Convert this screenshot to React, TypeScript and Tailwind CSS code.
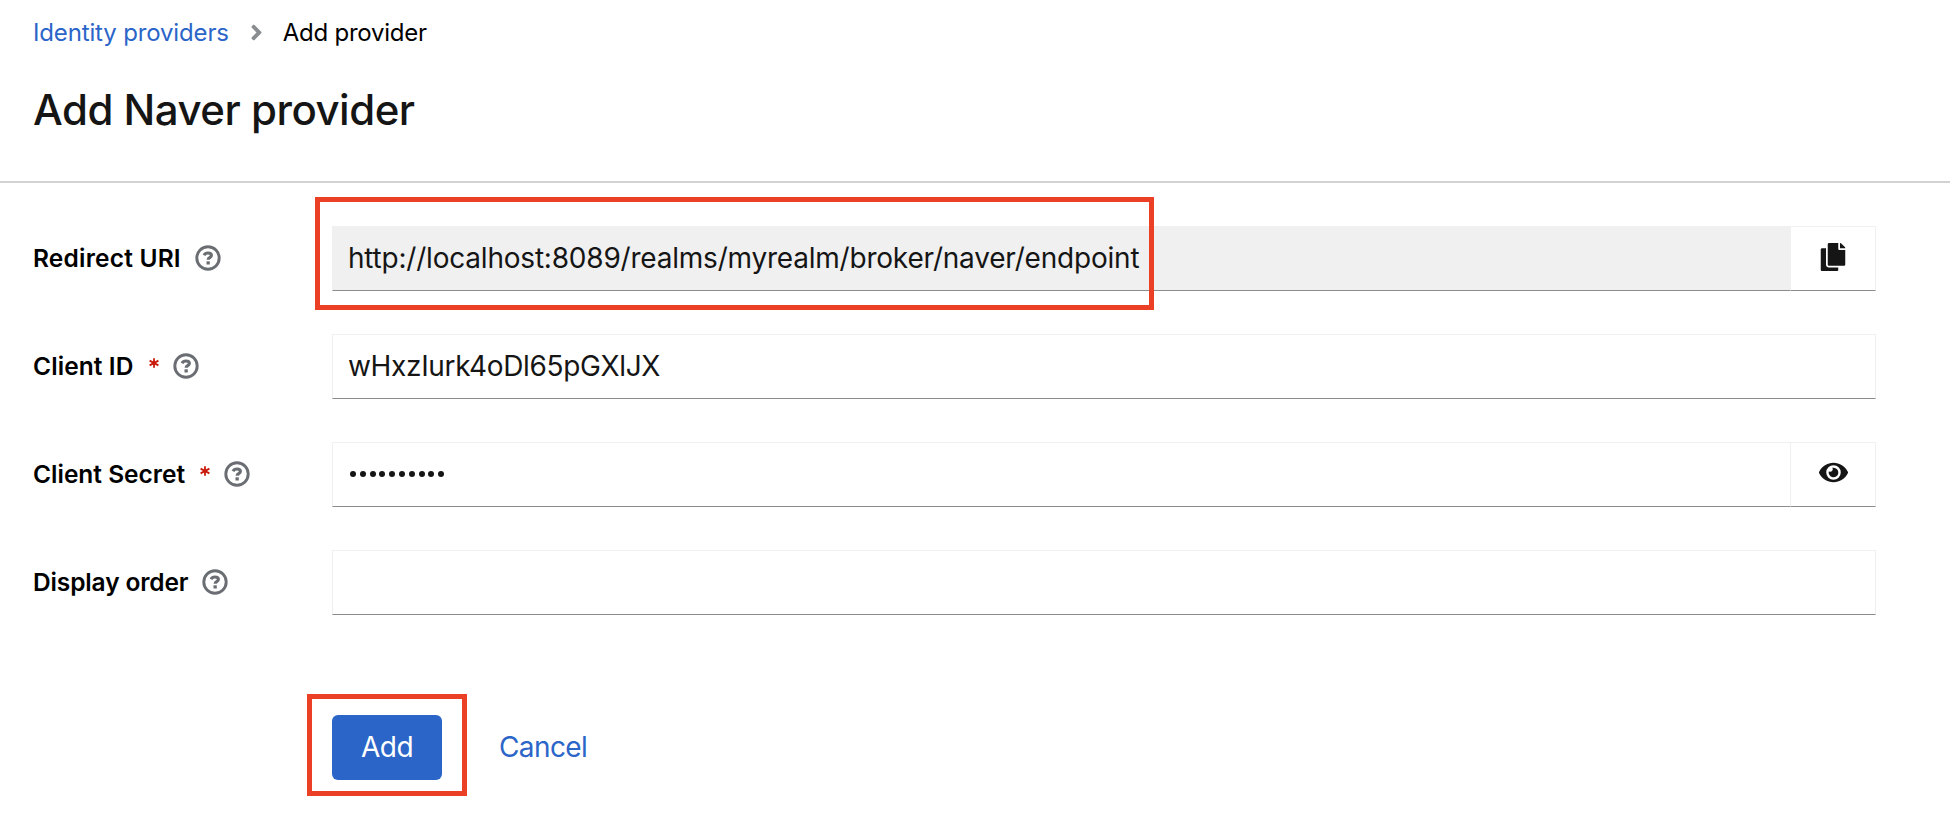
import type { ReactNode } from 'react';
import { FaAngleRight, FaCopy, FaEye } from 'react-icons/fa';

function HelpIcon() {
  return (
    <svg viewBox="0 0 26 26" className="size-[26px] shrink-0" fill="none" aria-hidden="true">
      <circle cx="13" cy="13" r="11.2" stroke="#6a6e73" strokeWidth="2.9" />
      <path d="M9 10.2C9.8 8.7 11.1 8 12.9 8c2 0 3.5 1 3.5 2.5 0 2.2-3.3 2.1-3.3 4.3" stroke="#6a6e73" strokeWidth="3.1" />
      <rect x="11.5" y="16.3" width="3.3" height="3.2" fill="#6a6e73" />
    </svg>
  );
}

function Asterisk() {
  return (
    <svg viewBox="0 0 10 10" className="mb-[7px] ml-[15px] size-[10px] shrink-0" stroke="#c9190b" strokeWidth="1.8" aria-hidden="true">
      <path d="M5 0.2v9.6M0.6 2.6l8.8 4.8M9.4 2.6L0.6 7.4" />
    </svg>
  );
}

type FieldProps = { label: string; tracking?: string; required?: boolean; children: ReactNode };

function Field({ label, tracking = '', required, children }: FieldProps) {
  return (
    <div className="flex h-[65px]">
      <div className="flex w-[300px] items-center pb-px pl-px">
        <span className={`text-[24.5px] leading-8 font-semibold text-black ${tracking}`}>{label}</span>
        {required && <Asterisk />}
        <span className="ml-[14px]">
          <HelpIcon />
        </span>
      </div>
      <div className="relative flex w-[1544px]">{children}</div>
    </div>
  );
}

const box = 'flex items-center border border-[#f0f0f0] border-b-[#8a8d90] text-[28px] leading-8 text-[#151515]';

export default function App() {
  return (
    <div className="h-[826px] w-[1950px] overflow-hidden bg-white font-['Inter',sans-serif]">
      <header className="h-[183px] border-b-2 border-[#d2d2d2] pl-8">
        <nav className="flex items-center pt-[17px] pl-px text-[24px] leading-8">
          <a className="tracking-[-0.15px] text-[#2b65c8]">Identity providers</a>
          <FaAngleRight className="mb-0.5 ml-[15px] size-[25px] text-[#8a8d90]" />
          <span className="ml-[14px] tracking-[-0.25px] text-black">Add provider</span>
        </nav>
        <h1 className="mt-[36px] pl-px text-[42px] leading-[50px] font-medium tracking-[-0.5px] text-[#151515]">Add Naver provider</h1>
      </header>
      <main className="flex flex-col gap-[43px] pt-[43px] pl-8">
        <Field label="Redirect URI" tracking="tracking-[0.2px]">
          <div className={`${box} flex-1 border-r-0 bg-[#f0f0f0] pb-0.5 pl-[15px] tracking-[-0.21px]`}>
            http://localhost:8089/realms/myrealm/broker/naver/endpoint
          </div>
          <button className={`${box} w-[86px] justify-center pb-1`}>
            <FaCopy className="size-[28px]" />
          </button>
          <div className="absolute -top-[29px] -left-[17px] h-[113px] w-[839px] border-5 border-[#eb4025]" />
        </Field>
        <Field label="Client ID" tracking="tracking-[0.1px]" required>
          <div className={`${box} flex-1 pb-0.5 pl-[15px] tracking-[-0.33px]`}>wHxzIurk4oDl65pGXlJX</div>
        </Field>
        <Field label="Client Secret" required>
          <div className={`${box} flex-1 border-r-0 pb-0.5 pl-[17px]`}>
            <span className="flex gap-[3.8px]">
              {Array.from({ length: 10 }, (_, i) => (
                <span key={i} className="size-[6px] rounded-full bg-[#151515]" />
              ))}
            </span>
          </div>
          <button className={`${box} w-[86px] justify-center pb-1`}>
            <FaEye className="size-[29px]" />
          </button>
        </Field>
        <Field label="Display order" tracking="tracking-[-0.13px]">
          <div className={`${box} flex-1`} />
        </Field>
        <div className="mt-[57px] flex pl-[300px] text-[28px]">
          <div className="relative">
            <button className="flex h-[65px] w-[110px] items-center justify-center rounded-md bg-[#2b65c8] pb-0.5 tracking-[-0.5px] text-white">Add</button>
            <div className="absolute -top-[21px] -left-[25px] h-[102px] w-[160px] border-5 border-[#eb4025]" />
          </div>
          <button className="ml-[57px] pb-0.5 tracking-[-0.6px] text-[#2b65c8]">Cancel</button>
        </div>
      </main>
    </div>
  );
}
